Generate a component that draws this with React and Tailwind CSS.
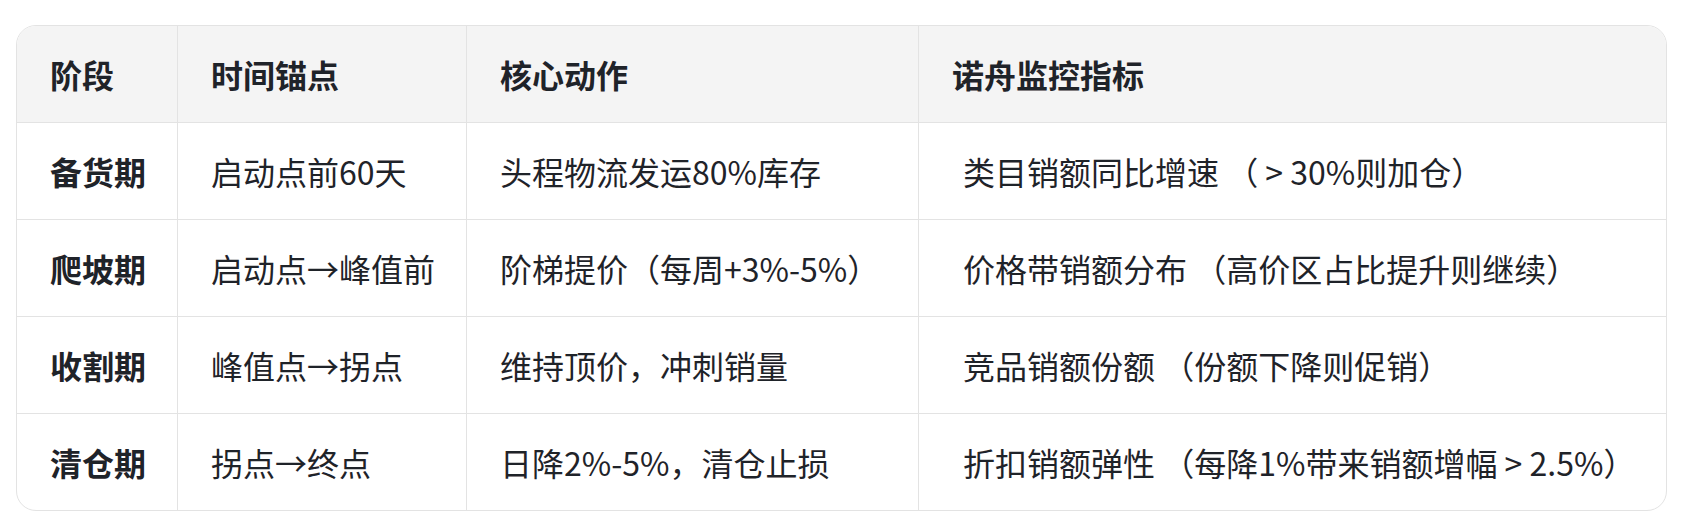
const HEADERS = ["阶段", "时间锚点", "核心动作", "诺舟监控指标"];

const ROWS = [
  ["备货期", "启动点前60天", "头程物流发运80%库存", "类目销额同比增速 （ > 30%则加仓）"],
  ["爬坡期", "启动点→峰值前", "阶梯提价（每周+3%-5%）", "价格带销额分布 （高价区占比提升则继续）"],
  ["收割期", "峰值点→拐点", "维持顶价，冲刺销量", "竞品销额份额 （份额下降则促销）"],
  ["清仓期", "拐点→终点", "日降2%-5%，清仓止损", "折扣销额弹性 （每降1%带来销额增幅 > 2.5%）"],
];

const font = { fontFamily: '"Noto Sans CJK SC", "Noto Sans", sans-serif' };

export default function App() {
  return (
    <div className="w-[1687px] h-[524px] bg-white pt-[25px] pl-4" style={font}>
      <div className="w-[1651px] rounded-[20px] border border-[#e3e3e3] overflow-hidden text-[32px] text-[#1f2329]">
        {/* Header */}
        <div className="grid grid-cols-[160px_289px_452px_1fr] h-[97px] bg-[#f4f4f4] border-b border-[#e3e3e3] font-bold">
          {HEADERS.map((h, i) => (
            <div
              key={h}
              className={`flex items-center pl-[33px] ${i > 0 ? "border-l border-[#e3e3e3]" : ""}`}
            >
              {h}
            </div>
          ))}
        </div>

        {/* Body */}
        {ROWS.map((row, r) => (
          <div
            key={row[0]}
            className={`grid grid-cols-[160px_289px_452px_1fr] ${
              r < ROWS.length - 1 ? "h-[97px] border-b border-[#e3e3e3]" : "h-[96px]"
            }`}
          >
            <div className="flex items-center pl-[33px] font-bold">{row[0]}</div>
            <div className="flex items-center pl-[33px] border-l border-[#e3e3e3]">{row[1]}</div>
            <div className="flex items-center pl-[33px] border-l border-[#e3e3e3]">{row[2]}</div>
            <div className="flex items-center pl-[44px] border-l border-[#e3e3e3] whitespace-pre">{row[3]}</div>
          </div>
        ))}
      </div>
    </div>
  );
}
